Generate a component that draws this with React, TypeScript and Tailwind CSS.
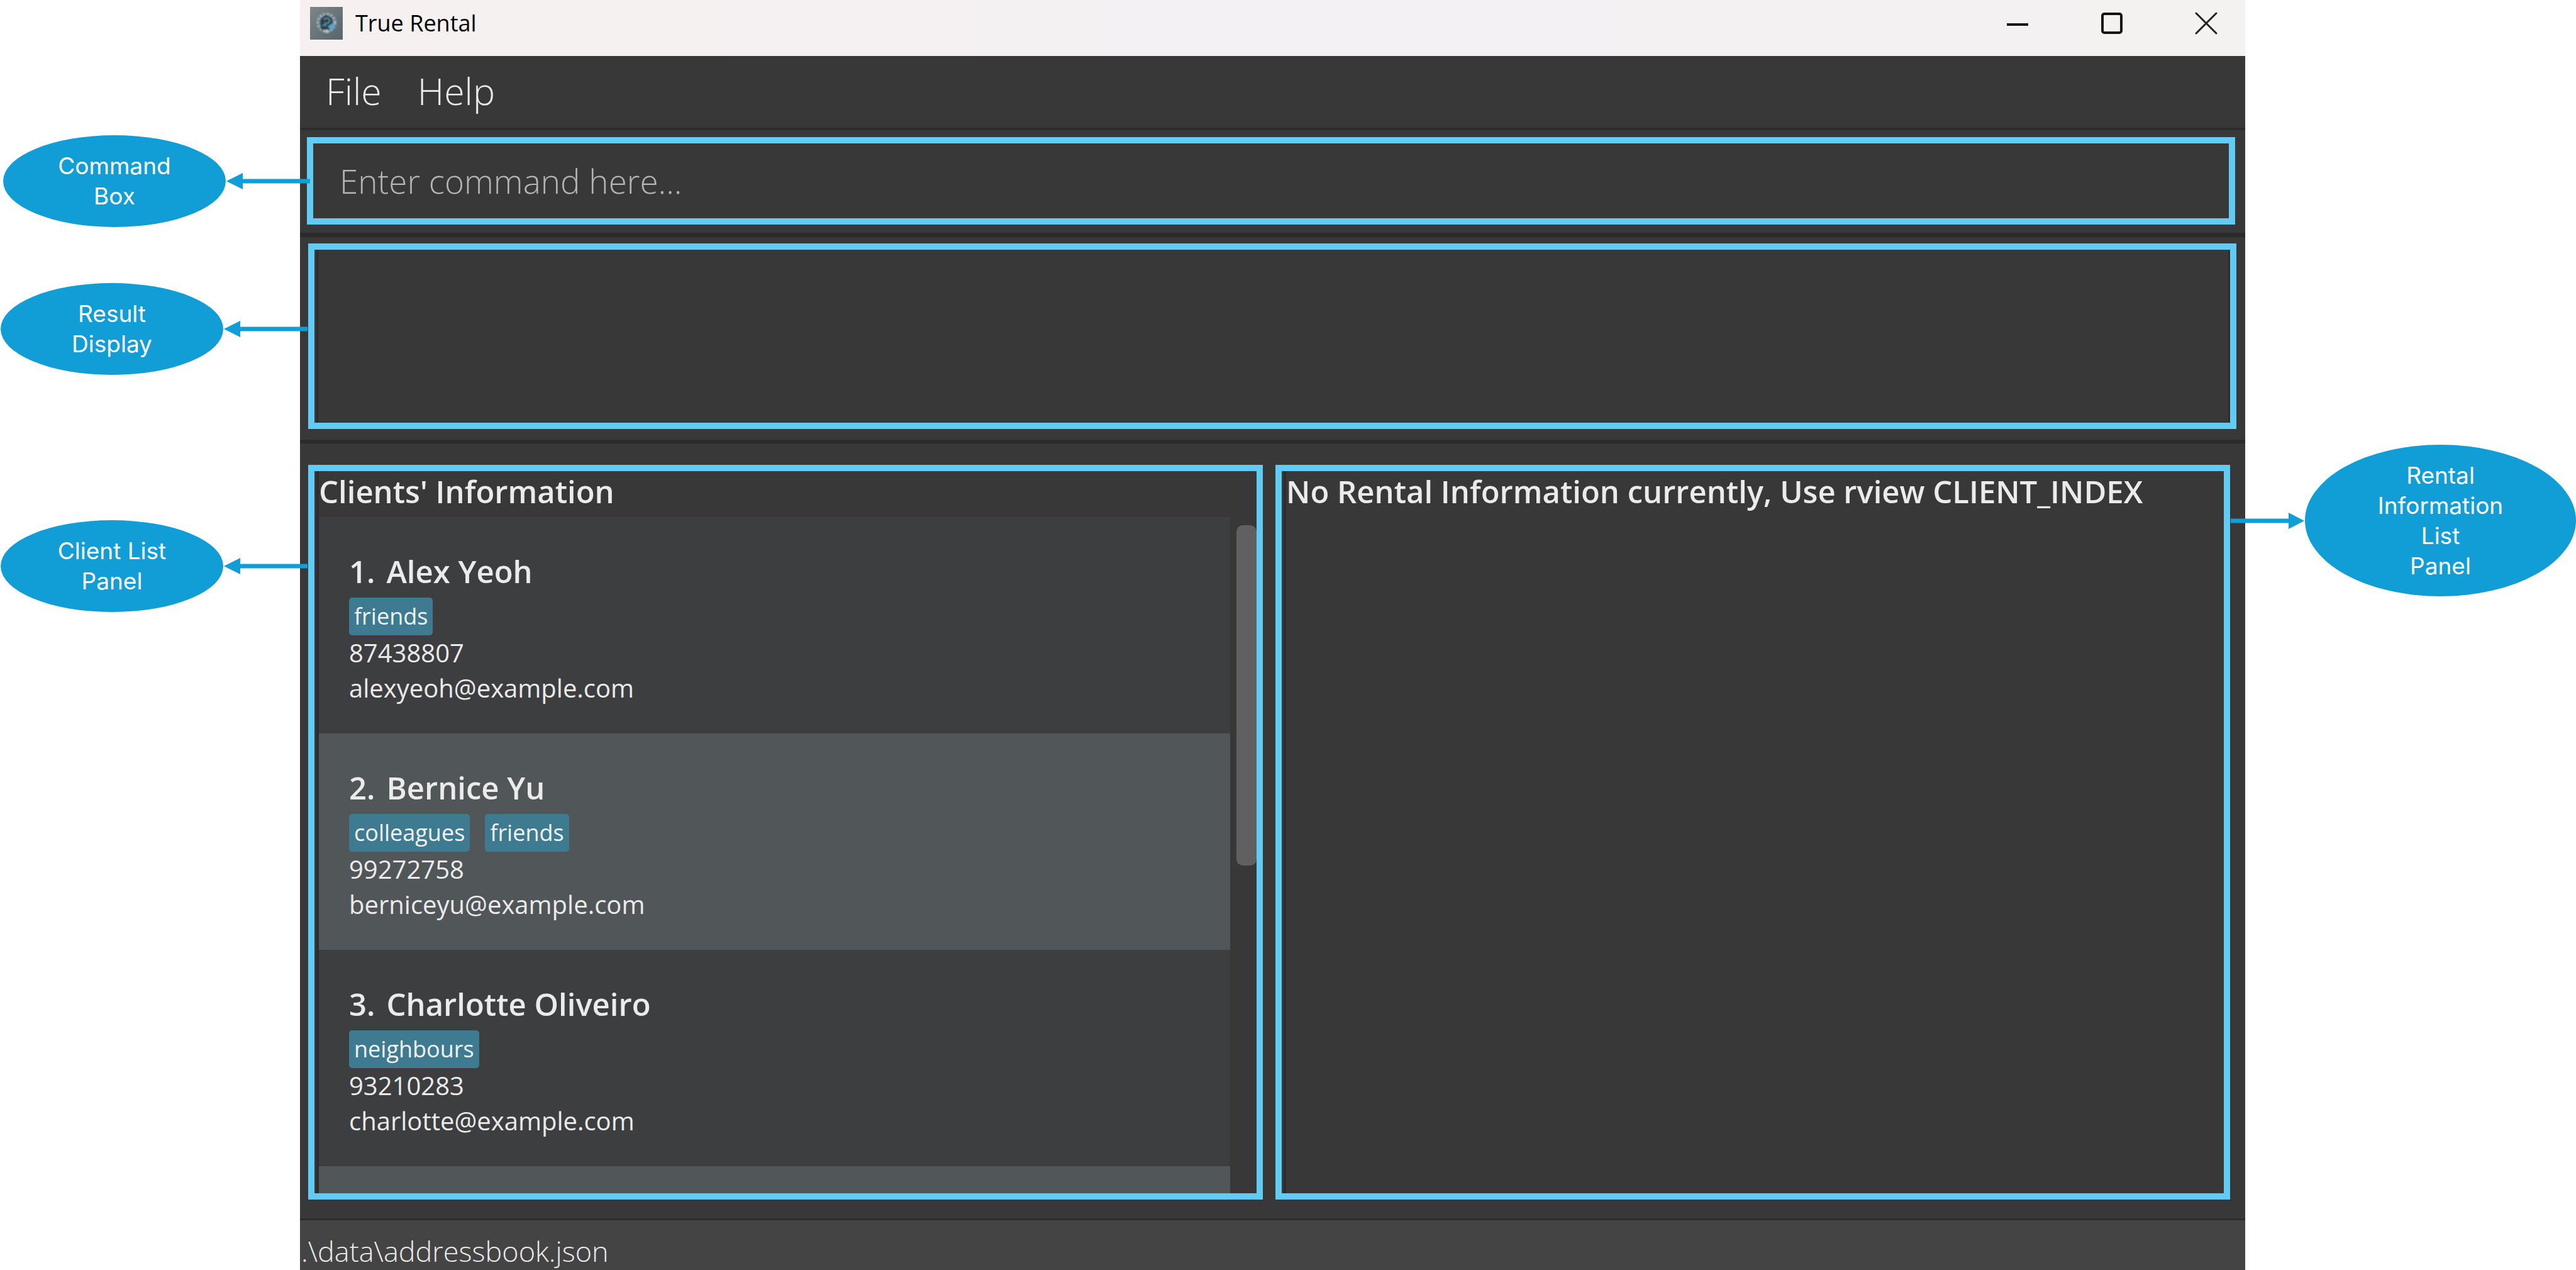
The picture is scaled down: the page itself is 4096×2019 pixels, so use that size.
import type { ReactNode } from "react";

type Client = { name: string; tags: string[]; phone: string; email: string };

const clients: Client[] = [
  { name: "Alex Yeoh", tags: ["friends"], phone: "87438807", email: "alexyeoh@example.com" },
  { name: "Bernice Yu", tags: ["colleagues", "friends"], phone: "99272758", email: "berniceyu@example.com" },
  { name: "Charlotte Oliveiro", tags: ["neighbours"], phone: "93210283", email: "charlotte@example.com" },
];

function AppIcon() {
  return (
    <svg viewBox="0 0 52 52" className="size-[52px]" aria-hidden="true">
      <defs>
        <linearGradient id="icon-bg" x1="0" y1="0" x2="1" y2="1">
          <stop offset="0" stopColor="#7d8689" />
          <stop offset="1" stopColor="#56646d" />
        </linearGradient>
        <filter id="icon-soft">
          <feGaussianBlur stdDeviation="0.9" />
        </filter>
      </defs>
      <rect width="52" height="52" fill="url(#icon-bg)" />
      <g filter="url(#icon-soft)">
        <circle cx="26" cy="25" r="14" fill="none" stroke="#a9bcc2" strokeWidth="3.5" strokeDasharray="3.4 2.6" />
        <circle cx="26" cy="25" r="11.5" fill="#4c626d" stroke="#8da3ab" />
        <path d="M17 36V20l8-8 10 6v16l-5 2z" fill="#263f4e" />
        <path d="M22 20c4-4 9-2 9 2s-5 5-8 3M20 29h6" fill="none" stroke="#6f94a6" strokeWidth="1.8" />
        <path d="M28 31l8-5 4 5-5 7z" fill="#5aa7cf" />
        <path d="M22 39l5-3 5 3-5 3z" fill="#b4c3c8" />
      </g>
    </svg>
  );
}

function Arrow({ flip = false }: { flip?: boolean }) {
  return flip ? (
    <svg viewBox="0 0 117 26" className="h-[26px] w-[117px] shrink-0" fill="#119ed7" aria-hidden="true">
      <path d="M0 9.5h92V0l25 13-25 13v-9.500H0z" />
    </svg>
  ) : (
    <svg viewBox="0 0 133 26" className="h-[26px] w-[133px] shrink-0" fill="#119ed7" aria-hidden="true">
      <path d="M133 9.500H26V0L0 13l26 13v-9.500h107z" />
    </svg>
  );
}

function Callout({ lines, side, place }: { lines: string[]; side: "left" | "right"; place: string }) {
  const right = side === "right";
  return (
    <aside className={"absolute z-10 flex items-center gap-px " + place}>
      {right && <Arrow flip />}
      <div
        className={
          "flex shrink-0 flex-col items-center justify-center rounded-[50%] bg-[#119ed7] font-['Inter',sans-serif] text-[37px] leading-[48px] text-white " +
          (right ? "h-[241px] w-[431px]" : "h-[146px] w-[354px]")
        }
      >
        {lines.map((line) => (
          <span key={line} className="whitespace-nowrap">{line}</span>
        ))}
      </div>
      {!right && <Arrow />}
    </aside>
  );
}

function Frame({ className = "", children }: { className?: string; children?: ReactNode }) {
  return <div className={"border-[10px] border-[#61cbf4] " + className}>{children}</div>;
}

function ClientCard({ client, index }: { client: Client; index: number }) {
  return (
    <li className="bg-[#3c3e3f] px-12 pt-14 pb-11 even:bg-[#515658]">
      <h3 className="flex gap-[18px] text-[49px] leading-[60px] font-semibold">
        <span>{index}.</span>
        <span>{client.name}</span>
      </h3>
      <ul className="mt-3 flex gap-6">
        {client.tags.map((tag) => (
          <li key={tag} className="rounded-[5px] bg-[#3e7b91] px-2 text-[36px] leading-[60px] font-medium text-[#f2f2f2]">
            {tag}
          </li>
        ))}
      </ul>
      <p className="text-[40px] leading-[56px]">{client.phone}</p>
      <p className="text-[40px] leading-[56px]">{client.email}</p>
    </li>
  );
}

export default function App() {
  return (
    <div className="h-screen overflow-hidden bg-white pr-[526px] pl-[477px] font-['Open_Sans',sans-serif] text-[#ebebeb]">
      <div className="flex h-full flex-col bg-[#383838]">
        <header className="flex h-[89px] shrink-0 items-center justify-between bg-linear-to-r from-[#f6f1f0] via-[#f4f1f4] to-[#f3f2f1] pr-[30px] pb-4 pl-4 text-black">
          <div className="flex items-center gap-5">
            <AppIcon />
            <h1 className="text-[36px]">True Rental</h1>
          </div>
          <div className="flex gap-[86px]">
            <button type="button" aria-label="Minimize" className="grid size-16 place-items-center">
              <svg viewBox="0 0 36 36" className="size-9" fill="none" stroke="#111" strokeWidth="4" aria-hidden="true">
                <path d="M1 20h34" />
              </svg>
            </button>
            <button type="button" aria-label="Maximize" className="grid size-16 place-items-center">
              <svg viewBox="0 0 36 36" className="size-9" fill="none" stroke="#111" strokeWidth="4" aria-hidden="true">
                <rect x="3" y="3" width="30" height="30" rx="3" />
              </svg>
            </button>
            <button type="button" aria-label="Close" className="grid size-16 place-items-center">
              <svg viewBox="0 0 36 36" className="size-9" fill="none" stroke="#222" strokeWidth="3" strokeLinecap="round" aria-hidden="true">
                <path d="M2 2l32 32M34 2L2 34" />
              </svg>
            </button>
          </div>
        </header>

        <nav className="flex h-[118px] shrink-0 items-center gap-[57px] border-b-4 border-[#2d2d2d] pb-1 pl-[41px] text-[59px] font-light">
          <button type="button">File</button>
          <button type="button">Help</button>
        </nav>

        <section className="relative mt-[11px] mr-4 ml-[11px] shrink-0">
          <Callout side="left" lines={["Command", "Box"]} place="top-1/2 right-full -mr-[5px] -translate-y-1/2" />
          <Frame className="flex h-[139px]">
            <input
              type="text"
              aria-label="Command"
              placeholder="Enter command here..."
              className="w-full bg-transparent px-[42px] text-[53px] font-light outline-none placeholder:text-[#b4b4b4]"
            />
          </Frame>
        </section>

        <hr className="mt-[13px] h-[7px] shrink-0 border-0 bg-[#2b2b2b]" />

        <section className="relative mt-[10px] mr-[14px] ml-[13px] shrink-0" aria-label="Result display">
          <Callout side="left" lines={["Result", "Display"]} place="top-[63px] right-full mr-px" />
          <Frame className="h-[295px] pl-[3px]">
            <div className="h-full border-x-[3px] border-[#2d2d2d]" />
          </Frame>
        </section>

        <hr className="mt-[17px] h-[6px] shrink-0 border-0 bg-[#2b2b2b]" />

        <main className="mt-[34px] mr-6 mb-[30px] ml-[13px] grid min-h-0 flex-1 grid-cols-2 gap-5">
          <section className="relative flex min-h-0">
            <Callout side="left" lines={["Client List", "Panel"]} place="top-[88px] right-full mr-px" />
            <Frame className="flex w-full pl-[3px]">
              <div className="flex w-full flex-col border-l-4 border-[#2d2d2d]">
                <h2 className="pb-[9px] text-[49px] leading-[64px] font-semibold">Clients' Information</h2>
                <div className="flex min-h-0 flex-1 gap-[10px]">
                  <ol className="flex flex-1 flex-col">
                    {clients.map((client, i) => (
                      <ClientCard key={client.name} client={client} index={i + 1} />
                    ))}
                    <li aria-hidden="true" className="flex-1 bg-[#515658]" />
                  </ol>
                  <div className="w-8 pt-[13px]">
                    <div className="h-[541px] rounded-[10px] bg-[#606060]" />
                  </div>
                </div>
              </div>
            </Frame>
          </section>
          <section className="relative flex min-h-0">
            <Frame className="flex w-full pl-[3px]">
              <div className="w-full border-l-4 border-[#2d2d2d]">
                <h2 className="text-[49px] leading-[64px] font-semibold whitespace-nowrap">
                  No Rental Information currently, Use rview CLIENT_INDEX
                </h2>
              </div>
            </Frame>
            <Callout side="right" lines={["Rental", "Information", "List", "Panel"]} place="-top-8 left-full ml-px" />
          </section>
        </main>

        <footer className="shrink-0 border-t-[3px] border-[#2b2b2b] bg-[#444444] pt-[18px] pl-[2px] text-[45px] leading-[61px] font-light">
          .\data\addressbook.json
        </footer>
      </div>
    </div>
  );
}
